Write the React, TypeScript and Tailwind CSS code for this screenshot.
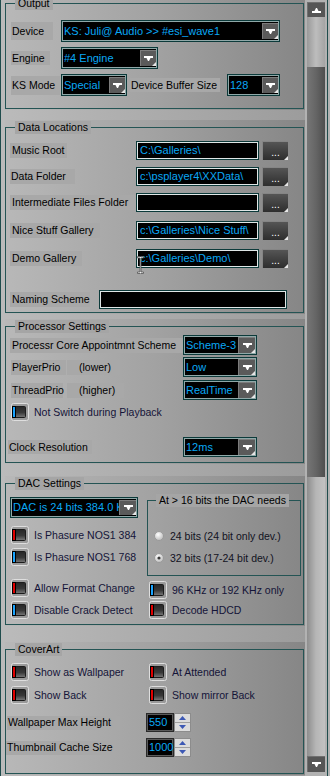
import React from 'react';

const RED = '#e00000';
const BLUE = '#19a4ff';

function Arrow({ up = false }: { up?: boolean }) {
  return (
    <svg width="9" height="6" viewBox="0 0 9 6" className={up ? 'rotate-180' : ''}>
      <polygon points="0,0 9,0 9,2 6.5,2 5,5 4,5 2.5,2 0,2" fill="#fff" />
    </svg>
  );
}

function Corner() {
  return (
    <svg className="absolute right-0 bottom-0" width="4" height="4" viewBox="0 0 4 4">
      <polygon points="4,0 4,4 0,4" fill="#e6e6e6" />
    </svg>
  );
}

function DropBtn({ cls }: { cls: string }) {
  return (
    <div className={`relative shrink-0 flex items-center justify-center bg-[#5a5a5a] border-t border-l border-[#7c7c7c] ${cls}`}>
      <Arrow />
      <Corner />
    </div>
  );
}

function Combo({ text, cls, btn = 'w-[16px] h-[16px]' }: { text: string; cls: string; btn?: string }) {
  return (
    <div className={`flex items-center shrink-0 bg-black border border-[#0c3a3a] shadow-[inset_0_0_0_1px_#8fa8a8] pr-[1px] text-[11px] ${cls}`}>
      <span className="flex-1 min-w-0 overflow-hidden whitespace-nowrap pl-[2px] text-[#0aa8f5]">{text}</span>
      <DropBtn cls={btn} />
    </div>
  );
}

function Edit({ text = '', cls, children }: { text?: string; cls: string; children?: React.ReactNode }) {
  return (
    <div className={`relative flex items-center shrink-0 bg-black border border-[#0c3a3a] shadow-[inset_0_0_0_1px_#dfe6e6] pl-[3px] text-[11px] text-[#0aa8f5] whitespace-nowrap ${cls}`}>
      {text}
      {children}
    </div>
  );
}

function Browse() {
  return (
    <div className="relative shrink-0 ml-[3px] w-[26px] h-[19px] flex items-end justify-center pb-[3px] bg-linear-to-b from-[#555555] to-[#2e2e2e] border-t border-l border-[#858585] text-white text-[10px] leading-[8px]">
      ...
      <Corner />
    </div>
  );
}

function Lbl({ children, cls }: { children: React.ReactNode; cls: string }) {
  return <div className={`flex items-center shrink-0 bg-[#a8a8a8] whitespace-nowrap pl-[1px] ${cls}`}>{children}</div>;
}

function Check({ color }: { color: string }) {
  return (
    <svg width="18" height="18" viewBox="0 0 18 18" className="shrink-0">
      <defs>
        <linearGradient id="cbg" x1="0" y1="0" x2="0" y2="1">
          <stop offset="0" stopColor="#262626" />
          <stop offset="0.55" stopColor="#383838" />
          <stop offset="1" stopColor="#7a7a7a" />
        </linearGradient>
      </defs>
      <rect x="0.5" y="0.5" width="17" height="17" rx="2" fill="#9a9a9a" stroke="#dedede" />
      <rect x="3.5" y="3.5" width="11" height="11" rx="1" fill="url(#cbg)" stroke="#1c1c1c" />
      <rect x="1.5" y="3.5" width="3" height="11" fill={color} stroke="#000" />
    </svg>
  );
}

function CheckItem({ color, label, cls = '' }: { color: string; label: string; cls?: string }) {
  return (
    <div className={`flex items-center h-[18px] ${cls}`}>
      <Check color={color} />
      <span className="ml-[5px] whitespace-nowrap text-[#141438]">{label}</span>
    </div>
  );
}

function Radio({ on, label }: { on?: boolean; label: string }) {
  return (
    <div className="flex items-center h-[14px] ml-[6px]">
      <svg width="10" height="10" viewBox="0 0 10 10" className="shrink-0">
        <defs>
          <radialGradient id="rg" cx="0.4" cy="0.35" r="0.7">
            <stop offset="0" stopColor="#ffffff" />
            <stop offset="1" stopColor="#b8b8b8" />
          </radialGradient>
        </defs>
        <circle cx="5" cy="5" r="4.5" fill="url(#rg)" stroke="#9a9a9a" />
        {on && <circle cx="5" cy="5" r="1.6" fill="#3a3a3a" />}
      </svg>
      <span className="ml-[6px] whitespace-nowrap text-[#121222]">{label}</span>
    </div>
  );
}

function Spin({ value }: { value: string }) {
  return (
    <div className="flex shrink-0 h-[19px]">
      <div className="w-[28px] h-full flex items-center bg-black border border-[#2a2a2a] shadow-[inset_0_0_0_1px_#5a5a5a] pl-[2px] text-[11px] text-[#0aa8f5]">
        {value}
      </div>
      <div className="w-[17px] h-full flex flex-col border border-[#8c8c8c] bg-[#dcdcdc]">
        <div className="flex-1 flex items-center justify-center border-b border-[#a0a0a0]">
          <svg width="7" height="4" viewBox="0 0 7 4"><polygon points="3.5,0 7,4 0,4" fill="#3c58b4" /></svg>
        </div>
        <div className="flex-1 flex items-center justify-center">
          <svg width="7" height="4" viewBox="0 0 7 4"><polygon points="0,0 7,0 3.5,4" fill="#3c58b4" /></svg>
        </div>
      </div>
    </div>
  );
}

function Panel({ title, cls, fcls, children }: { title: string; cls: string; fcls: string; children: React.ReactNode }) {
  return (
    <div className={`w-[300px] pt-[1px] pb-[1px] bg-linear-to-r from-[#b8b8b8] via-[#a2a2a2] to-[#868686] ${cls}`}>
      <fieldset className={`w-[299px] border border-[#245454] ${fcls}`}>
        <legend className="ml-[9px] px-[3px] bg-[#a5a5a5] leading-[13px]">{title}</legend>
        {children}
      </fieldset>
    </div>
  );
}

function DataRow({ label, lcls, value, cls }: { label: string; lcls: string; value?: string; cls: string }) {
  return (
    <div className={`flex items-center h-[19px] ${cls}`}>
      <div className="w-[130px] shrink-0 flex">
        <Lbl cls={`ml-[4px] h-[15px] ${lcls}`}>{label}</Lbl>
      </div>
      <Edit text={value} cls="w-[123px] h-[19px]" />
      <Browse />
    </div>
  );
}

// mouse pointer caught in the screenshot
function IBeam() {
  return (
    <svg className="absolute left-[0px] top-[6px]" width="7" height="18" viewBox="0 0 7 18">
      <path d="M0.5 0.5h2.5l0.5 0.5l0.5-0.5h2.5v1.5h-2.5v14h2.5v1.5h-2.5l-0.5-0.5l-0.5 0.5h-2.5v-1.5h2.5v-14h-2.5z" fill="#f0f0f0" stroke="#555" strokeWidth="0.8" />
    </svg>
  );
}

export default function App() {
  return (
    <div className="w-[330px] h-[776px] overflow-hidden flex font-['Liberation_Sans',Arial,sans-serif] text-[10.5px] leading-[13px] text-black">
      <div className="w-[305px] h-full overflow-hidden border-l border-[#1f4c4c] pl-[4px] bg-linear-to-r from-[#bbbbbb] to-[#9c9c9c]">
        <div className="-mt-[4px]">
          {/* Output */}
          <Panel title="Output" cls="" fcls="pb-[12px]">
            <div className="mt-[10px] flex items-center h-[22px]">
              <Lbl cls="ml-[5px] w-[42px] h-[18px]">Device</Lbl>
              <Combo text="KS: Juli@ Audio >> #esi_wave1" cls="ml-[8px] w-[219px] h-[22px]" />
            </div>
            <div className="mt-[5px] flex items-center h-[22px]">
              <Lbl cls="ml-[5px] w-[39px] h-[14px]">Engine</Lbl>
              <Combo text="#4 Engine" cls="ml-[11px] w-[97px] h-[22px]" />
            </div>
            <div className="mt-[5px] flex items-center h-[22px]">
              <Lbl cls="ml-[5px] w-[49px] h-[19px]">KS Mode</Lbl>
              <Combo text="Special" cls="ml-[1px] w-[66px] h-[22px]" />
              <Lbl cls="ml-[3px] w-[90px] h-[14px]">Device Buffer Size</Lbl>
              <Combo text="128" cls="ml-[7px] w-[53px] h-[22px]" />
            </div>
          </Panel>

          {/* Data Locations */}
          <Panel title="Data Locations" cls="mt-[10px]" fcls="pb-[3px]">
            <DataRow label="Music Root" lcls="w-[57px] pl-[2px]" value="C:\Galleries\" cls="mt-[7px]" />
            <DataRow label="Data Folder" lcls="w-[65px]" value="c:\psplayer4\XXData\" cls="mt-[7px]" />
            <DataRow label="Intermediate Files Folder" lcls="w-[126px] pl-[2px]" cls="mt-[7px]" />
            <DataRow label="Nice Stuff Gallery" lcls="w-[90px] pl-[2px]" value="c:\Galleries\Nice Stuff\" cls="mt-[9px]" />
            <div className="mt-[9px] flex items-center h-[19px]">
              <div className="w-[130px] shrink-0 flex">
                <Lbl cls="ml-[4px] h-[15px] w-[72px] pl-[2px]">Demo Gallery</Lbl>
              </div>
              <Edit text="c:\Galleries\Demo\" cls="w-[123px] h-[19px]">
                <IBeam />
              </Edit>
              <Browse />
            </div>
            <div className="mt-[22px] flex items-center h-[19px]">
              <div className="w-[93px] shrink-0 flex">
                <Lbl cls="ml-[4px] h-[15px] w-[80px] pl-[2px]">Naming Scheme</Lbl>
              </div>
              <Edit cls="w-[188px] h-[19px]" />
            </div>
          </Panel>

          {/* Processor Settings */}
          <Panel title="Processor Settings" cls="mt-[5px]" fcls="pb-[5px]">
            <div className="mt-[2px] flex items-center h-[20px]">
              <div className="w-[177px] shrink-0 flex">
                <Lbl cls="ml-[4px] w-[173px] h-[15px] pl-[2px]">Processr Core Appointmnt Scheme</Lbl>
              </div>
              <Combo text="Scheme-3" cls="w-[74px] h-[20px]" btn="w-[17px] h-[16px]" />
            </div>
            <div className="mt-[2px] flex items-center h-[20px]">
              <div className="w-[177px] shrink-0 flex">
                <Lbl cls="ml-[5px] w-[55px] h-[15px]">PlayerPrio</Lbl>
                <Lbl cls="ml-[1px] w-[53px] h-[15px] pl-[12px]">(lower)</Lbl>
              </div>
              <Combo text="Low" cls="w-[74px] h-[20px]" btn="w-[17px] h-[16px]" />
            </div>
            <div className="mt-[3px] flex items-center h-[20px]">
              <div className="w-[177px] shrink-0 flex">
                <Lbl cls="ml-[5px] w-[52px] h-[15px]">ThreadPrio</Lbl>
                <Lbl cls="ml-[4px] w-[57px] h-[15px] pl-[12px]">(higher)</Lbl>
              </div>
              <Combo text="RealTime" cls="w-[74px] h-[20px]" btn="w-[17px] h-[16px]" />
            </div>
            <CheckItem color={BLUE} label="Not Switch during Playback" cls="mt-[3px] ml-[5px]" />
            <div className="mt-[16px] flex items-center h-[20px]">
              <div className="w-[177px] shrink-0 flex">
                <Lbl cls="ml-[2px] w-[84px] h-[14px]">Clock Resolution</Lbl>
              </div>
              <Combo text="12ms" cls="w-[74px] h-[20px]" btn="w-[17px] h-[16px]" />
            </div>
          </Panel>

          {/* DAC Settings */}
          <Panel title="DAC Settings" cls="mt-[12px]" fcls="pb-[5px]">
            <div className="flex items-start">
              <div className="w-[141px] shrink-0 pl-[4px] mt-[7px]">
                <Combo text="DAC is 24 bits 384.0 KHz" cls="w-[128px] h-[21px]" btn="w-[17px] h-[15px]" />
                <CheckItem color={RED} label="Is Phasure NOS1 384" cls="mt-[8px] ml-[1px]" />
                <CheckItem color={BLUE} label="Is Phasure NOS1 768" cls="mt-[4px] ml-[1px]" />
              </div>
              <fieldset className="mt-[4px] w-[154px] border border-[#245454] pb-[10px]">
                <legend className="ml-[8px] px-[3px] bg-[#a5a5a5] leading-[13px] whitespace-nowrap">{'At > 16 bits the DAC needs'}</legend>
                <div className="mt-[22px]">
                  <Radio label="24 bits (24 bit only dev.)" />
                </div>
                <div className="mt-[8px]">
                  <Radio on label="32 bits (17-24 bit dev.)" />
                </div>
              </fieldset>
            </div>
            <div className="mt-[3px] grid grid-cols-[143px_1fr] gap-y-[4px]">
              <CheckItem color={RED} label="Allow Format Change" cls="ml-[5px]" />
              <CheckItem color={BLUE} label="96 KHz or 192 KHz only" cls="translate-y-[2px]" />
              <CheckItem color={BLUE} label="Disable Crack Detect" cls="ml-[5px]" />
              <CheckItem color={RED} label="Decode HDCD" />
            </div>
          </Panel>

          {/* CoverArt */}
          <Panel title="CoverArt" cls="mt-[16px]" fcls="pb-[16px]">
            <div className="mt-[7px] grid grid-cols-[143px_1fr] gap-y-[5px]">
              <CheckItem color={RED} label="Show as Wallpaper" cls="ml-[5px]" />
              <CheckItem color={RED} label="At Attended" />
              <CheckItem color={RED} label="Show Back" cls="ml-[5px]" />
              <CheckItem color={RED} label="Show mirror Back" />
            </div>
            <div className="mt-[9px] flex items-center h-[19px]">
              <div className="w-[140px] shrink-0 flex">
                <Lbl cls="ml-[1px] w-[113px] h-[14px]">Wallpaper Max Height</Lbl>
              </div>
              <Spin value="550" />
            </div>
            <div className="mt-[6px] flex items-center h-[19px]">
              <div className="w-[140px] shrink-0 flex">
                <Lbl cls="w-[110px] h-[14px]">Thumbnail Cache Size</Lbl>
              </div>
              <Spin value="1000" />
            </div>
          </Panel>
        </div>
      </div>

      {/* scrollbar */}
      <div className="w-[25px] h-full flex bg-[#b2b2b2]">
        <div className="ml-[2px] w-[18px] h-full flex flex-col pt-[2px] pb-[4px]">
          <div className="relative h-[15px] shrink-0 bg-[#565656] border-t border-l border-[#707070] flex items-center justify-center">
            <Arrow up />
          </div>
          <div className="h-[50px] shrink-0 bg-linear-to-r from-[#9a9a9a] via-[#bdbdbd] to-[#a4a4a4]" />
          <div className="h-[410px] shrink-0 bg-linear-to-r from-[#767676] via-[#656565] to-[#4e4e4e]" />
          <div className="flex-1 bg-linear-to-r from-[#8e8e8e] via-[#b6b6b6] to-[#c2c2c2]" />
          <div className="relative h-[16px] shrink-0 bg-[#565656] border-t border-l border-[#707070] flex items-center justify-center">
            <Arrow />
          </div>
        </div>
        <div className="ml-[2px] w-[1px] h-full bg-[#1f4c4c]" />
      </div>
    </div>
  );
}
